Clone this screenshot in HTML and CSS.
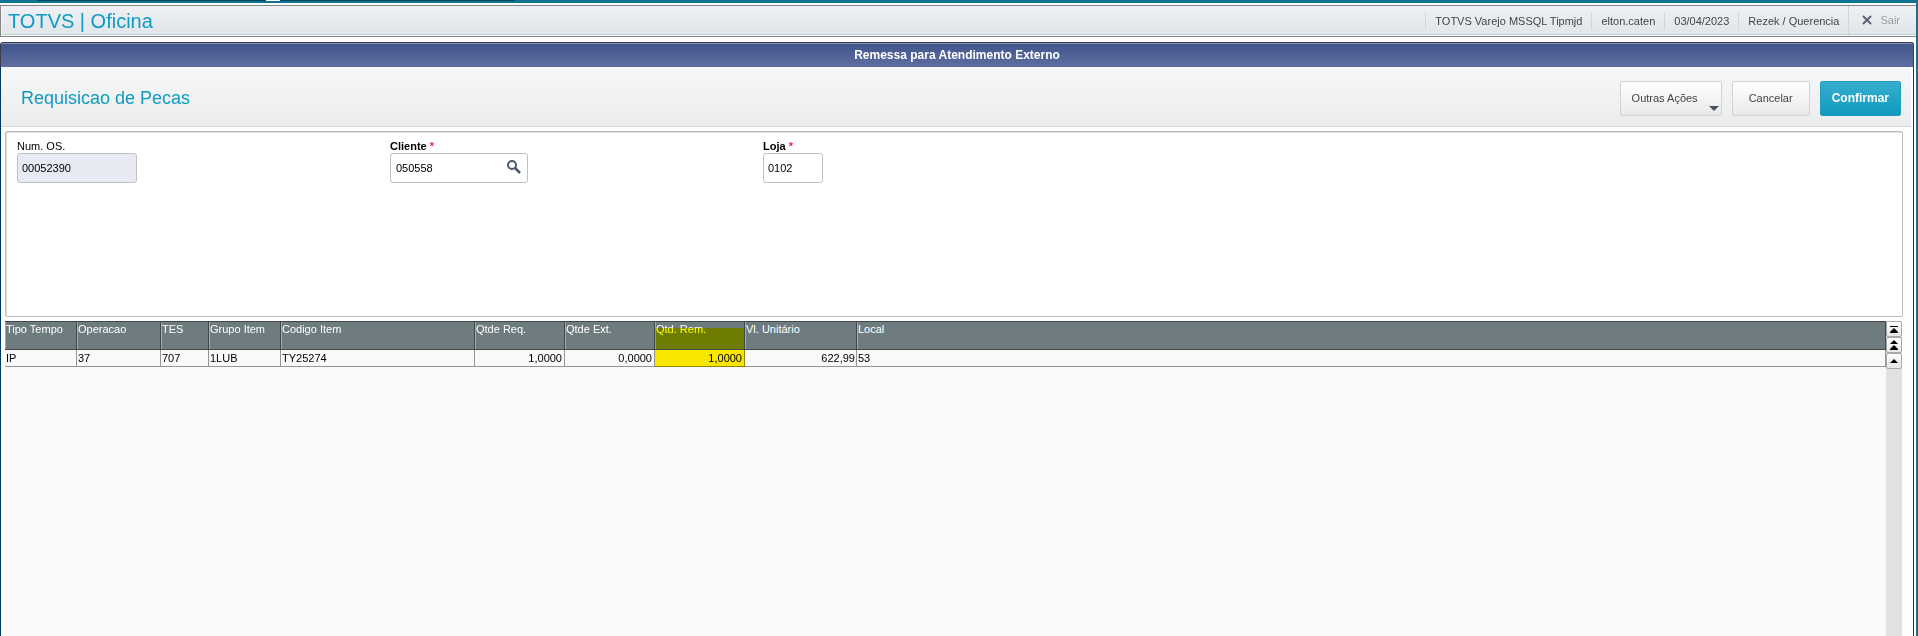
FILE: index.html
```html
<!DOCTYPE html>
<html lang="pt-BR">
<head>
  <meta charset="UTF-8">
  <title>TOTVS | Oficina</title>
  <link rel="stylesheet" href="styles.css">
</head>
<body>

<div class="tabstrip">
  <div class="tabstrip-dark"></div>
  <div class="tabstrip-light"></div>
  <div class="tabstrip-dark last"></div>
</div>

<div class="window">
  <header class="topbar">
    <h1 class="brand">TOTVS | Oficina</h1>
    <ul class="session">
      <li>TOTVS Varejo MSSQL Tipmjd</li>
      <li>elton.caten</li>
      <li>03/04/2023</li>
      <li>Rezek / Querencia</li>
    </ul>
    <button class="exit" type="button">
      <svg width="10" height="10" viewBox="0 0 10 10"><path d="M1 1l8 8M9 1l-8 8" stroke="#5b6470" stroke-width="2" fill="none"/></svg>
      Sair
    </button>
  </header>

  <main class="dialog">
    <div class="dialog-title">Remessa para Atendimento Externo</div>
    <div class="dialog-body">
      <div class="toolbar">
        <h2 class="toolbar-title">Requisicao de Pecas</h2>
        <button class="btn btn-menu" type="button">Outras Ações</button>
        <button class="btn" type="button">Cancelar</button>
        <button class="btn btn-primary" type="button">Confirmar</button>
      </div>

      <form class="fields">
        <div class="field">
          <label for="os">Num. OS.</label>
          <input class="input-os" id="os" type="text" value="00052390" readonly>
        </div>
        <div class="field">
          <label class="required" for="cliente">Cliente <span>*</span></label>
          <div class="lookup">
            <input id="cliente" type="text" value="050558">
            <button class="lookup-button" type="button" aria-label="Pesquisar">
              <svg width="14" height="14" viewBox="0 0 14 14" fill="none" stroke="#4c5868">
                <circle cx="5" cy="5" r="4" stroke-width="2"/>
                <path d="M8 8l5 5" stroke-width="2.5"/>
              </svg>
            </button>
          </div>
        </div>
        <div class="field">
          <label class="required" for="loja">Loja <span>*</span></label>
          <input class="input-loja" id="loja" type="text" value="0102">
        </div>
      </form>

      <div class="grid">
        <div class="grid-view">
          <table>
            <colgroup>
              <col class="w-tipo"><col class="w-oper"><col class="w-tes"><col class="w-grupo"><col class="w-codigo">
              <col class="w-qtde"><col class="w-qtde"><col class="w-qtde"><col class="w-valor"><col>
            </colgroup>
            <thead>
              <tr>
                <th>Tipo Tempo</th>
                <th>Operacao</th>
                <th>TES</th>
                <th>Grupo Item</th>
                <th>Codigo Item</th>
                <th>Qtde Req.</th>
                <th>Qtde Ext.</th>
                <th class="marked">Qtd. Rem.</th>
                <th>Vl. Unitário</th>
                <th>Local</th>
              </tr>
            </thead>
            <tbody>
              <tr>
                <td>IP</td>
                <td>37</td>
                <td>707</td>
                <td>1LUB</td>
                <td>TY25274</td>
                <td class="num">1,0000</td>
                <td class="num">0,0000</td>
                <td class="num marked">1,0000</td>
                <td class="num last-num">622,99</td>
                <td>53</td>
              </tr>
            </tbody>
          </table>
        </div>
        <div class="scroller">
          <button type="button" aria-label="Primeiro">
            <svg width="8" height="7" viewBox="0 0 8 7"><path d="M0 0h8v1H0zM4 2l4 4v1H0V6z"/></svg>
          </button>
          <button type="button" aria-label="Página anterior">
            <svg width="8" height="10" viewBox="0 0 8 10"><path d="M4 0l4 4H0zM4 5l4 4v1H0V9z"/></svg>
          </button>
          <button type="button" aria-label="Linha anterior">
            <svg width="8" height="4" viewBox="0 0 8 4"><path d="M4 0l4 4H0z"/></svg>
          </button>
        </div>
      </div>
    </div>
  </main>
</div>

</body>
</html>
```
FILE: styles.css
```css
* {
  box-sizing: border-box;
}

body {
  margin: 0;
  min-height: 100vh;
  display: flex;
  flex-direction: column;
  background: #fff;
  color: #000;
  font: 11px/14px "Liberation Sans", Arial, sans-serif;
}

button,
input {
  font: inherit;
}

.tabstrip {
  display: flex;
  height: 3px;
  padding-left: 37px;
  background: #0f7490;
}

.tabstrip-dark {
  width: 229px;
  height: 1px;
  background: #0b4a63;
}

.tabstrip-dark.last {
  width: 235px;
}

.tabstrip-light {
  width: 14px;
  height: 1px;
  background: #fff;
}

.window {
  flex: 1;
  display: flex;
  flex-direction: column;
  padding-top: 2px;
  border-right: 2px solid #0f7490;
}

/* top bar */
.topbar {
  display: flex;
  align-items: center;
  height: 32px;
  margin-bottom: 5px;
  padding-bottom: 1px;
  border: 1px solid #858585;
  border-right: none;
  background: linear-gradient(#eff0f3, #e0e5ea);
  box-shadow: inset 1px -1px #f4f6f7, inset 0 -2px #c3d1d0;
}

.brand {
  flex: 1;
  margin: 0 0 0 7px;
  color: #0f9bc0;
  font-size: 20px;
  line-height: 28px;
  font-weight: normal;
}

.session {
  display: flex;
  margin: 0;
  padding: 0;
  list-style: none;
  color: #444;
}

.session li {
  padding: 0 9px;
  border-left: 1px solid #d3d8d6;
  line-height: 18px;
}

.exit {
  display: flex;
  align-items: center;
  align-self: stretch;
  gap: 8px;
  margin-bottom: 1px;
  padding: 0 16px 0 13px;
  border: none;
  border-left: 1px solid #d0d5d5;
  background: none;
  color: #9a9ea5;
}

/* dialog */
.dialog {
  flex: 1;
  display: flex;
  flex-direction: column;
  margin-right: 2px;
}

.dialog-title {
  height: 25px;
  border: 1px solid #3a3d4a;
  border-bottom: none;
  border-radius: 3px 3px 0 0;
  background: linear-gradient(#40548a, #5f6ea0);
  box-shadow: inset 0 1px #8490b4;
  color: #fff;
  font-size: 12px;
  line-height: 25px;
  font-weight: bold;
  text-align: center;
}

.dialog-body {
  flex: 1;
  display: flex;
  flex-direction: column;
  padding-right: 2px;
  border: solid #003a66;
  border-width: 0 1px;
}

.toolbar {
  display: flex;
  align-items: center;
  gap: 10px;
  height: 60px;
  padding: 3px 10px 0 20px;
  border-bottom: 1px solid #d5d6d8;
  background: linear-gradient(#f6f8f7, #ebecee);
}

.toolbar-title {
  flex: 1;
  margin: 0;
  color: #0f9bc0;
  font-size: 18px;
  line-height: 24px;
  font-weight: normal;
}

.btn {
  height: 35px;
  padding: 0 16px;
  border: 1px solid #d0d2d3;
  border-radius: 2px;
  background: linear-gradient(#fff, #e9e9ea);
  color: #444;
}

.btn-menu {
  position: relative;
  padding: 0 23px 0 11px;
}

.btn-menu::after {
  content: "";
  position: absolute;
  right: 2px;
  bottom: 4px;
  border: solid transparent;
  border-width: 5px 5px 0;
  border-top-color: #4c5260;
}

.btn-primary {
  padding: 0 11px;
  border-color: #1d9ebf;
  background: linear-gradient(#38adcc, #0f9bc0);
  color: #fff;
  font-size: 12px;
  font-weight: bold;
}

/* fields */
.fields {
  display: flex;
  height: 186px;
  margin: 4px 8px 4px 4px;
  padding: 7px 11px;
  border: 1px solid #bdbdbd;
  border-radius: 2px;
  box-shadow: inset 1px 1px #dedede;
}

.field {
  width: 373px;
}

.field label {
  display: block;
}

.field .required {
  font-weight: bold;
}

.required span {
  color: #f0203a;
}

.field input {
  display: block;
  width: 138px;
  height: 30px;
  padding: 0 5px;
  border: 1px solid #c0c0c0;
  border-radius: 3px;
  background: #fff;
  color: #000;
}

.field .input-os {
  width: 120px;
  padding: 0 4px;
  background: #e7eaf2;
}

.field .input-loja {
  width: 60px;
  padding: 0 4px;
}

.lookup {
  position: relative;
  width: 138px;
}

.lookup-button {
  position: absolute;
  top: 7px;
  right: 7px;
  height: 14px;
  padding: 0;
  border: none;
  background: none;
}

.lookup-button svg {
  display: block;
}

/* grid */
.grid {
  flex: 1;
  display: flex;
  margin: 0 9px 0 4px;
}

.grid-view {
  flex: 1;
  background: #f9f9f9;
}

table {
  width: 100%;
  table-layout: fixed;
  border-collapse: separate;
  border-spacing: 0;
}

.w-tipo,
.w-grupo {
  width: 72px;
}

.w-oper {
  width: 84px;
}

.w-tes {
  width: 48px;
}

.w-codigo {
  width: 194px;
}

.w-qtde {
  width: 90px;
}

.w-valor {
  width: 112px;
}

th {
  position: relative;
  height: 29px;
  padding: 0 1px;
  border: solid #41484a;
  border-width: 1px 1px 1px 0;
  background: #6e7c80;
  box-shadow: inset 1px 0 #a2abad;
  color: #fff;
  font-weight: normal;
  text-align: left;
  vertical-align: top;
}

td {
  height: 17px;
  padding: 0 1px;
  border: solid #959595;
  border-width: 0 1px 1px 0;
}

.num {
  padding-right: 2px;
  text-align: right;
}

.last-num {
  padding-right: 1px;
}

th.marked::after {
  content: "";
  position: absolute;
  inset: 6px 0 0;
  background: #ff0;
  mix-blend-mode: multiply;
}

td.marked {
  background: #f9e600;
  border-color: #8f8500;
}

.scroller {
  width: 16px;
  background: #e1e1e1;
}

.scroller button {
  display: flex;
  align-items: center;
  justify-content: center;
  width: 16px;
  height: 16px;
  padding: 0;
  border: 1px solid #a9a9a9;
  border-radius: 2px;
  background: linear-gradient(#fff, #e6e6e6);
}
```
